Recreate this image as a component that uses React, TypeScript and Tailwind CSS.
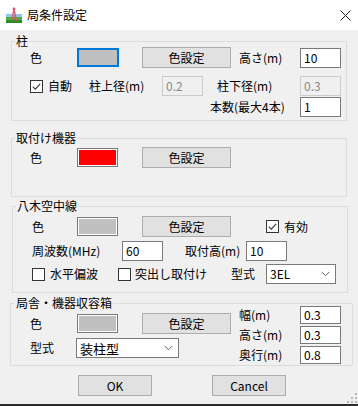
import React from "react";

function Swatch({ fill, focus }: { fill: string; focus?: boolean }) {
  if (focus) {
    return <div className="w-[42px] h-[19px] border-2 border-[#0078d7] bg-[#c0c0c0] shrink-0" />;
  }
  return (
    <div className="w-[41px] h-[19px] border border-[#7a7a7a] bg-white p-px shrink-0">
      <div className={`h-full w-full ${fill}`} />
    </div>
  );
}

function Btn({ label, w }: { label: string; w: string }) {
  return (
    <div className={`h-[21px] ${w} shrink-0 border border-[#adadad] bg-[#e1e1e1] flex items-center justify-center text-[12px] leading-[12px] text-black`}>
      {label}
    </div>
  );
}

function Field({ value, disabled, h }: { value: string; disabled?: boolean; h?: string }) {
  return (
    <div
      className={`${h ?? "h-[20px]"} w-[41px] shrink-0 border flex items-center pl-[3px] text-[12px] leading-[12px] ${
        disabled ? "border-[#cccccc] bg-[#f0f0f0] text-[#8a8a8a]" : "border-[#7a7a7a] bg-white text-black"
      }`}
    >
      {value}
    </div>
  );
}

function Check({ checked }: { checked?: boolean }) {
  return (
    <div className="w-[13px] h-[13px] shrink-0 border border-[#333333] bg-white flex items-center justify-center">
      {checked && (
        <svg width="11" height="11" viewBox="0 0 11 11">
          <path d="M1.8 5.6 L4.3 8.1 L9.2 2.8" stroke="#333333" strokeWidth="1.1" fill="none" />
        </svg>
      )}
    </div>
  );
}

function Chevron() {
  return (
    <svg width="9" height="6" viewBox="0 0 9 6">
      <path d="M0.8 1 L4.5 4.7 L8.2 1" stroke="#606060" strokeWidth="1" fill="none" />
    </svg>
  );
}

function Select({ value, w, big }: { value: string; w: string; big?: boolean }) {
  return (
    <div className={`h-[20px] ${w} shrink-0 border border-[#7a7a7a] bg-white flex items-center justify-between pl-[3px] pr-[5px]`}>
      <span className={big ? "text-[13px] leading-[13px]" : "text-[12px] leading-[12px]"}>{value}</span>
      <Chevron />
    </div>
  );
}

function Label({ text, w, ml }: { text: string; w: string; ml?: string }) {
  return <div className={`${w} ${ml ?? ""} shrink-0 text-[12px] leading-[14px] text-black whitespace-nowrap`}>{text}</div>;
}

function AppIcon() {
  return (
    <svg width="16" height="16" viewBox="0 0 16 16">
      <rect x="0" y="7" width="16" height="4" fill="#8fc3e8" />
      <rect x="0" y="10" width="16" height="6" fill="#4caf3a" />
      <rect x="0" y="13" width="16" height="3" fill="#2f8a2a" />
      <path d="M8 2 L5.5 14 M8 2 L10.5 14 M6.3 6 L9.7 6 M5.9 9 L10.1 9 M5.6 12 L10.4 12" stroke="#e0506a" strokeWidth="1" fill="none" />
      <circle cx="8" cy="2" r="1.4" fill="#e0506a" />
    </svg>
  );
}

export default function App() {
  return (
    <div className="w-[358px] h-[406px] relative bg-[#f0f0f0] font-['Noto_Sans_CJK_JP',sans-serif] text-black overflow-hidden">
      {/* title bar */}
      <div className="h-[30px] bg-white flex items-center pl-[6px] pr-[7px]">
        <AppIcon />
        <div className="ml-[5px] text-[12px] leading-[14px]">局条件設定</div>
        <div className="flex-1" />
        <svg width="11" height="11" viewBox="0 0 11 11">
          <path d="M0.5 0.5 L10.5 10.5 M10.5 0.5 L0.5 10.5" stroke="#222" strokeWidth="1" />
        </svg>
      </div>

      {/* body */}
      <div className="h-[374px] pt-[5px] flex flex-col">
        {/* 柱 */}
        <fieldset className="ml-[11px] w-[336px] min-w-0 border border-[#dcdcdc] p-0 m-0">
          <legend className="ml-[3px] px-[1px] text-[12px] leading-[12px]">柱</legend>
          <div className="pl-[18px] pb-[3px]">
            <div className="flex items-center h-[21px]">
              <Label text="色" w="w-[47px]" />
              <Swatch fill="bg-[#c0c0c0]" focus />
              <div className="w-[23px] shrink-0" />
              <Btn label="色設定" w="w-[89px]" />
              <Label text="高さ(m)" w="w-[61px]" ml="ml-[8px]" />
              <Field value="10" />
            </div>
            <div className="flex items-center h-[20px] mt-[8px]">
              <Check checked />
              <Label text="自動" w="w-[41px]" ml="ml-[5px]" />
              <Label text="柱上径(m)" w="w-[73px]" />
              <Field value="0.2" disabled />
              <Label text="柱下径(m)" w="w-[83px]" ml="ml-[14px]" />
              <Field value="0.3" disabled />
            </div>
            <div className="flex items-center h-[20px] mt-[1px]">
              <Label text="本数(最大4本)" w="w-[90px]" ml="ml-[180px]" />
              <Field value="1" />
            </div>
          </div>
        </fieldset>

        {/* 取付け機器 */}
        <fieldset className="mt-[11px] ml-[11px] w-[336px] min-w-0 border border-[#dcdcdc] p-0">
          <legend className="ml-[3px] px-[1px] text-[12px] leading-[12px]">取付け機器</legend>
          <div className="pl-[18px] pt-[3px] pb-[28px]">
            <div className="flex items-center h-[21px]">
              <Label text="色" w="w-[47px]" />
              <Swatch fill="bg-[#ff0000]" />
              <div className="w-[24px] shrink-0" />
              <Btn label="色設定" w="w-[89px]" />
            </div>
          </div>
        </fieldset>

        {/* 八木空中線 */}
        <fieldset className="mt-[3px] ml-[12px] w-[336px] min-w-0 border border-[#dcdcdc] p-0">
          <legend className="ml-[3px] px-[1px] text-[12px] leading-[12px]">八木空中線</legend>
          <div className="pl-[19px] pt-[4px] pb-[8px]">
            <div className="flex items-center h-[21px]">
              <Label text="色" w="w-[45px]" />
              <Swatch fill="bg-[#c0c0c0]" />
              <div className="w-[24px] shrink-0" />
              <Btn label="色設定" w="w-[89px]" />
              <div className="ml-[35px]">
                <Check checked />
              </div>
              <Label text="有効" w="w-[30px]" ml="ml-[5px]" />
            </div>
            <div className="flex items-center h-[20px] mt-[4px]">
              <Label text="周波数(MHz)" w="w-[90px]" />
              <Field value="60" />
              <Label text="取付高(m)" w="w-[61px]" ml="ml-[22px]" />
              <Field value="10" />
            </div>
            <div className="flex items-center h-[20px] mt-[3px]">
              <Check />
              <Label text="水平偏波" w="w-[68px]" ml="ml-[5px]" />
              <Check />
              <Label text="突出し取付け" w="w-[96px]" ml="ml-[4px]" />
              <Label text="型式" w="w-[35px]" />
              <Select value="3EL" w="w-[70px]" />
            </div>
          </div>
        </fieldset>

        {/* 局舎・機器収容箱 */}
        <fieldset className="mt-[4px] ml-[10px] w-[343px] min-w-0 border border-[#dcdcdc] p-0">
          <legend className="ml-[4px] px-[1px] text-[12px] leading-[12px]">局舎・機器収容箱</legend>
          <div className="pl-[19px] pb-[1px] flex">
            <div className="flex flex-col">
              <div className="flex items-center h-[21px] mt-[4px]">
                <Label text="色" w="w-[47px]" />
                <Swatch fill="bg-[#c0c0c0]" />
                <div className="w-[24px] shrink-0" />
                <Btn label="色設定" w="w-[89px]" />
              </div>
              <div className="flex items-center h-[20px] mt-[4px]">
                <Label text="型式" w="w-[46px]" />
                <Select value="装柱型" w="w-[103px]" big />
              </div>
            </div>
            <div className="ml-[8px] -mt-[3px] flex flex-col gap-[2px]">
              <div className="flex items-center h-[18px]">
                <Label text="幅(m)" w="w-[61px]" />
                <Field value="0.3" h="h-[18px]" />
              </div>
              <div className="flex items-center h-[18px]">
                <Label text="高さ(m)" w="w-[61px]" />
                <Field value="0.3" h="h-[18px]" />
              </div>
              <div className="flex items-center h-[18px]">
                <Label text="奥行(m)" w="w-[61px]" />
                <Field value="0.8" h="h-[18px]" />
              </div>
            </div>
          </div>
        </fieldset>

        {/* buttons */}
        <div className="mt-[9px] flex">
          <div className="ml-[78px]">
            <Btn label="OK" w="w-[74px]" />
          </div>
          <div className="ml-[60px]">
            <Btn label="Cancel" w="w-[74px]" />
          </div>
        </div>
      </div>
      <div className="h-[2px] bg-[#2b2b2b]" />

      {/* size grip */}
      <svg className="absolute right-[1px] bottom-[3px]" width="10" height="10" viewBox="0 0 10 10">
        <rect x="8" y="0" width="2" height="2" fill="#b8b8b8" />
        <rect x="4" y="4" width="2" height="2" fill="#b8b8b8" />
        <rect x="8" y="4" width="2" height="2" fill="#b8b8b8" />
        <rect x="0" y="8" width="2" height="2" fill="#b8b8b8" />
        <rect x="4" y="8" width="2" height="2" fill="#b8b8b8" />
        <rect x="8" y="8" width="2" height="2" fill="#b8b8b8" />
      </svg>
    </div>
  );
}
